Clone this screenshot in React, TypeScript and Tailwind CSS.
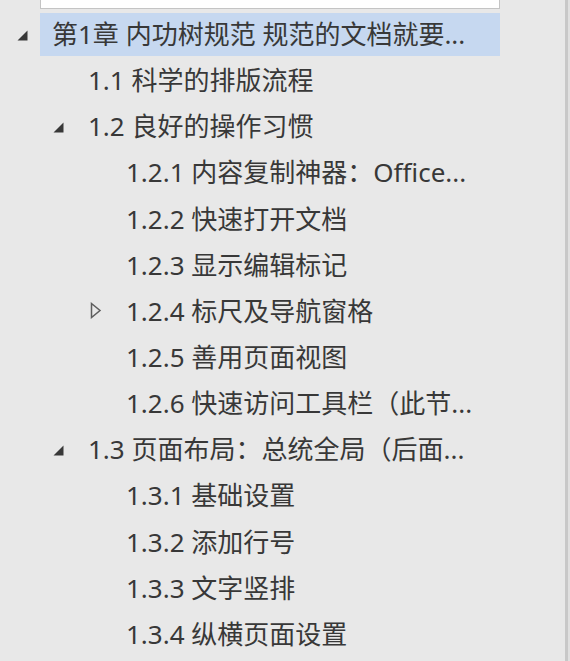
import React from 'react';

type NavItem = {
  label: string;
  level: 0 | 1 | 2;
  toggle?: 'open' | 'closed';
  selected?: boolean;
};

const ITEMS: NavItem[] = [
  { label: '第1章 内功树规范 规范的文档就要...', level: 0, toggle: 'open', selected: true },
  { label: '1.1 科学的排版流程', level: 1 },
  { label: '1.2 良好的操作习惯', level: 1, toggle: 'open' },
  { label: '1.2.1 内容复制神器：Office...', level: 2 },
  { label: '1.2.2 快速打开文档', level: 2 },
  { label: '1.2.3 显示编辑标记', level: 2 },
  { label: '1.2.4 标尺及导航窗格', level: 2, toggle: 'closed' },
  { label: '1.2.5 善用页面视图', level: 2 },
  { label: '1.2.6 快速访问工具栏（此节...', level: 2 },
  { label: '1.3 页面布局：总统全局（后面...', level: 1, toggle: 'open' },
  { label: '1.3.1 基础设置', level: 2 },
  { label: '1.3.2 添加行号', level: 2 },
  { label: '1.3.3 文字竖排', level: 2 },
  { label: '1.3.4 纵横页面设置', level: 2 },
];

const INDENT = ['pl-0', 'pl-[36px]', 'pl-[74px]'];

function Toggle({ kind }: { kind?: 'open' | 'closed' }) {
  if (kind === 'open') {
    return (
      <svg width="11" height="11" viewBox="0 0 11 11" className="ml-[17px] mt-[2px]">
        <path d="M10.5 0.5 L10.5 10.5 L0.5 10.5 Z" fill="#383838" />
      </svg>
    );
  }
  if (kind === 'closed') {
    return (
      <svg width="12" height="17" viewBox="0 0 12 17" className="ml-[16px]">
        <path d="M1.5 1.5 L10 8.5 L1.5 15.5 Z" fill="none" stroke="#5e5e5e" strokeWidth="1.5" />
      </svg>
    );
  }
  return null;
}

function NavRow({ item }: { item: NavItem }) {
  return (
    <div className={`flex h-[46.15px] items-center ${INDENT[item.level]}`}>
      <div className="flex w-[40px] shrink-0 items-center">
        <Toggle kind={item.toggle} />
      </div>
      <div
        className={`flex h-[43px] flex-1 items-center pl-[12px] ${
          item.selected ? 'bg-[#c6d8f0]' : ''
        }`}
      >
        <span className="whitespace-nowrap text-[26px] leading-none text-[#383838]">
          {item.label}
        </span>
      </div>
    </div>
  );
}

export default function App() {
  return (
    <div
      className="flex h-[661px] w-[570px] overflow-hidden bg-[#e8e8e8]"
      style={{ fontFamily: '"Noto Sans", "Noto Sans CJK SC", sans-serif' }}
    >
      <div className="flex w-[500px] flex-col">
        {/* bottom edge of the search box */}
        <div className="ml-[40px] h-[9px] border-x border-b border-[#c4c4c4] bg-white" />
        <div className="mt-[2px] flex flex-col">
          {ITEMS.map((item) => (
            <NavRow key={item.label} item={item} />
          ))}
        </div>
      </div>
      <div className="flex-1" />
      <div className="w-[3px] bg-[#c8c8c8]" />
      <div className="w-[2px] bg-[#e0e0e0]" />
    </div>
  );
}
